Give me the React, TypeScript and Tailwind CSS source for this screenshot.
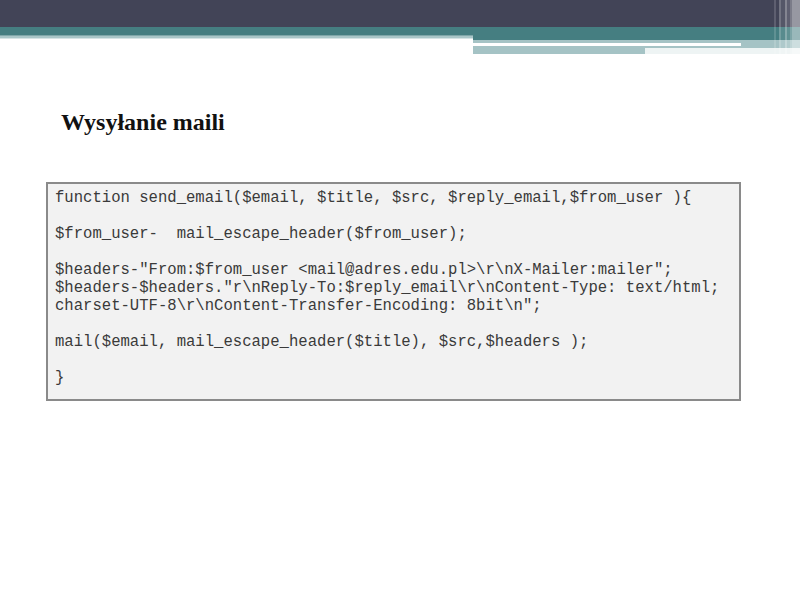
const codeLines = [
  "function send_email($email, $title, $src, $reply_email,$from_user ){",
  "",
  "$from_user-  mail_escape_header($from_user);",
  "",
  '$headers-"From:$from_user <mail@adres.edu.pl>\\r\\nX-Mailer:mailer";',
  '$headers-$headers."r\\nReply-To:$reply_email\\r\\nContent-Type: text/html;',
  'charset-UTF-8\\r\\nContent-Transfer-Encoding: 8bit\\n";',
  "",
  "mail($email, mail_escape_header($title), $src,$headers );",
  "",
  "}",
];

const Header = () => {
  return (
    <div className="relative flex w-full">
      <div className="flex w-[473px] flex-col">
        <div className="h-[27px] bg-[#424457]" />
        <div className="h-[8px] bg-[#457e81]" />
        <div className="h-[1px] bg-[#7fa7a9]" />
        <div className="h-[2px] bg-[#a9c6c8]" />
        <div className="h-[1px] bg-[#d6e4e5]" />
      </div>
      <div className="flex flex-1 flex-col">
        <div className="h-[27px] bg-[#424457]" />
        <div className="h-[13px] bg-[#457e81]" />
        <div className="h-[3px] bg-[#a5c3c5]" />
        <div className="flex h-[3px]">
          <div className="w-[268px] bg-white" />
          <div className="flex-1 bg-[#a5c3c5]" />
        </div>
        <div className="flex h-[8px]">
          <div className="w-[172px] bg-[#a5c3c5]" />
          <div className="flex-1 border-t-2 border-[#a5c3c5] bg-[#eef4f4]" />
        </div>
      </div>
      <div className="absolute right-0 top-0 flex h-[55px] w-[26px]">
        <div className="w-[2px] bg-white/15" />
        <div className="w-[3px]" />
        <div className="w-[2px] bg-white/25" />
        <div className="w-[4px] bg-white/10" />
        <div className="w-[2px] bg-white/35" />
        <div className="w-[3px] bg-white/15" />
        <div className="w-[2px] bg-white/30" />
        <div className="w-[8px] bg-white/45" />
      </div>
    </div>
  );
};

const App = () => {
  return (
    <div className="h-[600px] w-[800px] overflow-hidden bg-white">
      <Header />
      <h1 className="ml-[61px] mt-[54px] font-['Liberation_Serif',serif] text-[24px] font-bold leading-[28px] text-[#111]">
        Wysyłanie maili
      </h1>
      <div className="ml-[46px] mt-[46px] w-[695px] border-2 border-[#8a8a8a] bg-[#f2f2f2] pb-[12px] pl-[7px] pt-[5px]">
        {codeLines.map((line, i) => (
          <div
            key={i}
            className="h-[18px] whitespace-pre font-['Liberation_Mono',monospace] text-[15.6px] leading-[18px] text-[#3a3a3a]"
          >
            {line}
          </div>
        ))}
      </div>
    </div>
  );
};

export default App;
